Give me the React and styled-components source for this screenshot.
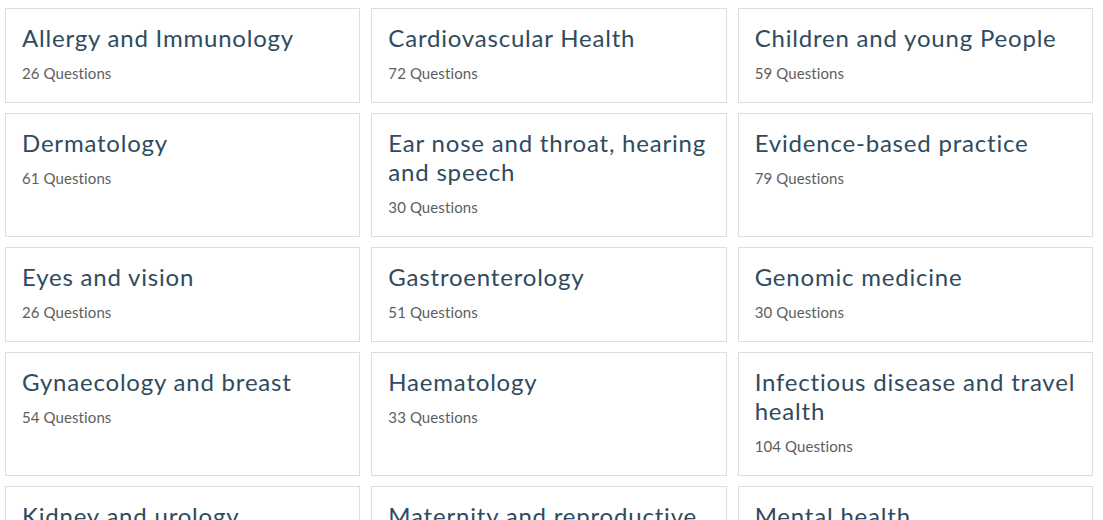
import React from "react";
import styled, { createGlobalStyle } from "styled-components";

const GlobalStyle = createGlobalStyle`
    html, body {
        margin: 0;
        padding: 0;
        background: #ffffff;
    }

    body {
        font-family: Lato, "Open Sans", sans-serif;
    }
`;

const Grid = styled.main`
    display: grid;
    grid-template-columns: repeat(3, 1fr);
    gap: 10px 11px;
    width: 1088px;
    padding: 8px 0 0 5px;
    box-sizing: content-box;
`;

const Card = styled.a`
    display: block;
    padding: 14px 16px 18px;
    border: 1px solid #dedede;
    background: #ffffff;
    text-decoration: none;
    cursor: pointer;
`;

const Title = styled.h3`
    margin: 0 0 11px;
    font-weight: 400;
    font-size: 24px;
    line-height: 29px;
    letter-spacing: 0.8px;
    color: #2f4b5e;
`;

const Count = styled.p`
    margin: 0;
    font-size: 15px;
    font-weight: 400;
    line-height: 21px;
    letter-spacing: 0.1px;
    color: #5e5e5e;
`;

const topics = [
    { name: "Allergy and Immunology", count: 26 },
    { name: "Cardiovascular Health", count: 72 },
    { name: "Children and young People", count: 59 },
    { name: "Dermatology", count: 61 },
    { name: "Ear nose and throat, hearing and speech", count: 30 },
    { name: "Evidence-based practice", count: 79 },
    { name: "Eyes and vision", count: 26 },
    { name: "Gastroenterology", count: 51 },
    { name: "Genomic medicine", count: 30 },
    { name: "Gynaecology and breast", count: 54 },
    { name: "Haematology", count: 33 },
    { name: "Infectious disease and travel health", count: 104 },
    { name: "Kidney and urology", count: 41 },
    { name: "Maternity and reproductive health", count: 48 },
    { name: "Mental health", count: 87 },
];

export default function App() {
    return (
        <>
            <GlobalStyle />
            <Grid>
                {topics.map((topic) => (
                    <Card key={topic.name} href="#">
                        <Title>{topic.name}</Title>
                        <Count>{topic.count} Questions</Count>
                    </Card>
                ))}
            </Grid>
        </>
    );
}
